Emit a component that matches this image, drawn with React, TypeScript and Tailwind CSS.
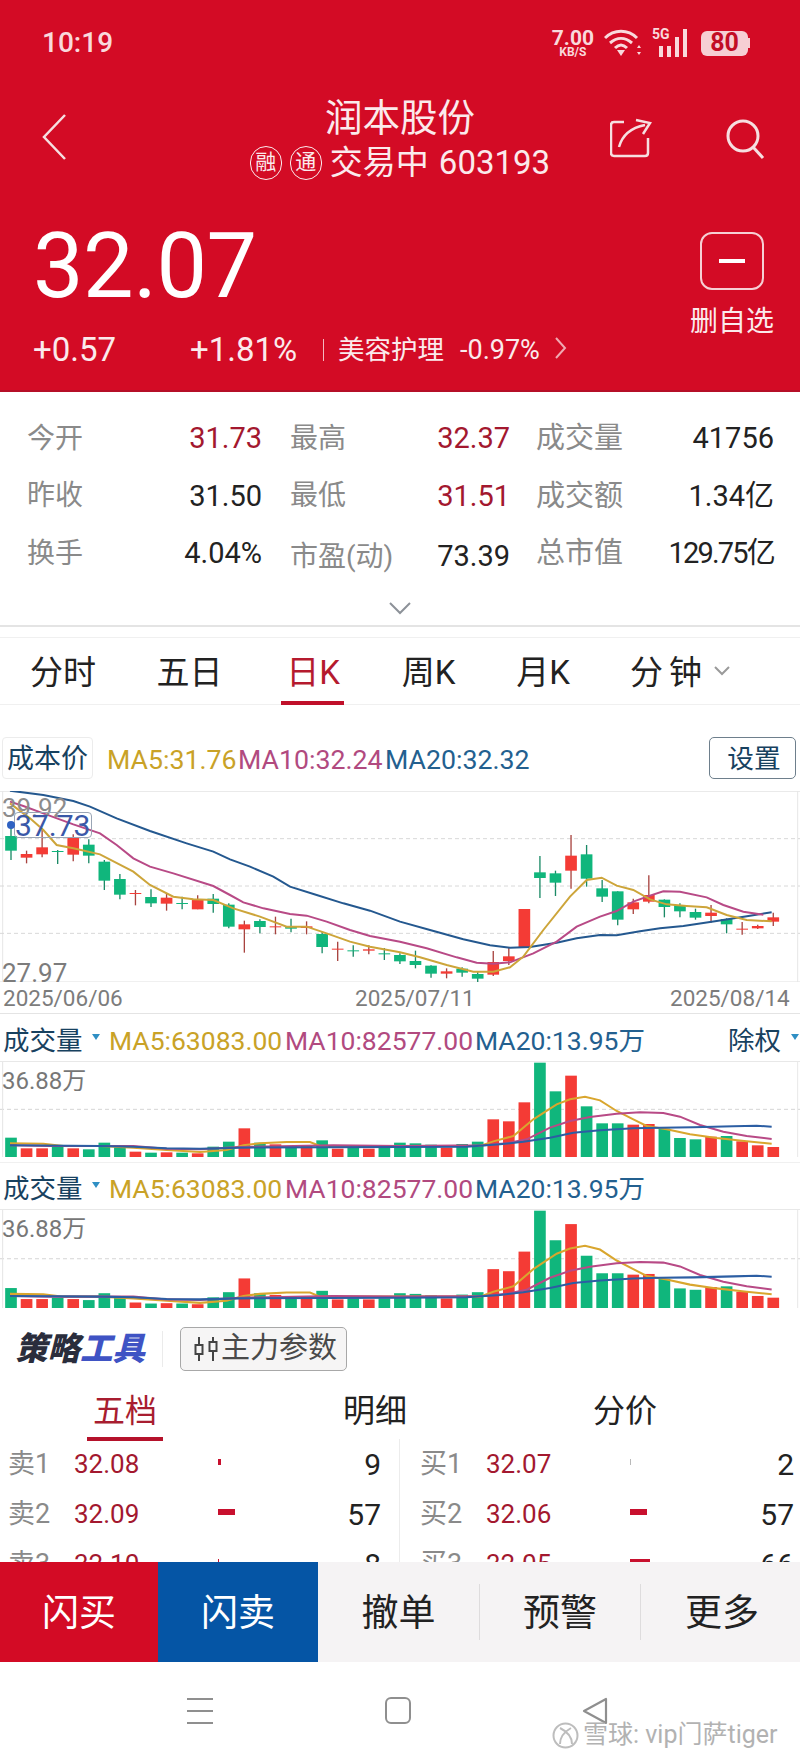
import React from 'react';

const RED = '#f43b35';
const GREEN = '#10b67c';

// [up, high, top, bottom, low] in 3x chart coordinates
const candles: [number, number, number, number, number][] = [
  [0, 320, 348, 392, 420], [1, 392, 402, 413, 430], [1, 330, 382, 403, 412], [0, 390, 393, 396, 432],
  [1, 343, 354, 404, 424], [0, 358, 374, 407, 430], [0, 420, 425, 482, 510], [0, 462, 477, 524, 538],
  [1, 510, 519, 522, 556], [0, 508, 531, 550, 561], [1, 522, 533, 551, 572], [0, 530, 549, 552, 568],
  [1, 526, 540, 568, 568], [0, 522, 536, 552, 578], [0, 550, 554, 620, 625], [1, 602, 613, 628, 698],
  [0, 598, 603, 621, 640], [1, 590, 619, 622, 643], [0, 596, 620, 626, 637], [1, 604, 619, 624, 643],
  [0, 636, 642, 681, 700], [1, 665, 686, 689, 723], [0, 676, 691, 694, 710], [1, 676, 688, 692, 703],
  [0, 684, 700, 703, 720], [0, 700, 705, 724, 732], [0, 692, 723, 735, 745], [0, 736, 737, 761, 773],
  [1, 745, 754, 761, 775], [0, 742, 746, 758, 770], [0, 755, 762, 776, 790], [1, 693, 726, 764, 768],
  [1, 683, 709, 723, 735], [1, 567, 567, 684, 684], [0, 408, 457, 474, 534], [0, 452, 460, 488, 528],
  [1, 345, 407, 452, 506], [0, 375, 403, 476, 500], [0, 480, 505, 530, 546], [0, 514, 514, 599, 616],
  [1, 536, 547, 568, 582], [1, 466, 525, 545, 550], [0, 538, 539, 561, 592], [0, 550, 555, 574, 592],
  [0, 566, 576, 593, 599], [1, 555, 578, 588, 608], [0, 595, 597, 613, 640], [1, 606, 626, 629, 644],
  [1, 614, 618, 625, 627], [1, 578, 592, 605, 618],
];

const ma20 = '30,212 130,225 220,243 270,260 350,295 450,333 560,370 640,395 690,418 750,440 820,470 870,500 950,525 1030,550 1110,572 1200,605 1290,630 1390,658 1470,676 1530,683 1590,681 1670,668 1730,655 1800,645 1850,646 1920,634 1980,625 2050,618 2150,603 2250,587 2315,577';
const ma10 = '30,245 70,258 130,280 220,313 300,340 350,375 400,415 450,440 520,460 640,498 690,525 730,547 790,565 870,582 920,587 980,605 1050,630 1110,648 1200,665 1280,685 1370,712 1430,728 1480,731 1530,727 1600,700 1670,665 1730,620 1800,590 1850,573 1900,545 1950,527 1990,514 2040,515 2120,532 2170,555 2230,575 2290,584';
const ma5 = '30,250 90,295 130,330 170,375 220,385 300,403 400,455 450,495 520,530 580,538 640,540 700,565 780,590 860,620 920,620 980,640 1050,665 1110,680 1200,697 1260,712 1340,735 1420,755 1480,755 1530,742 1570,710 1630,630 1710,530 1760,480 1805,473 1850,497 1900,510 1950,538 2000,553 2060,558 2120,562 2180,585 2240,600 2315,604';

const volTops = [355, 387, 387, 383, 387, 390, 370, 384, 397, 400, 399, 400, 402, 382, 367, 327, 370, 375, 380, 380, 363, 388, 385, 388, 385, 370, 372, 376, 385, 374, 367, 300, 306, 249, 130, 216, 169, 261, 312, 312, 316, 314, 328, 356, 360, 352, 350, 366, 378, 383];
const volMa5 = '30,372 130,373 190,380 300,380 400,385 500,392 600,398 680,392 730,378 780,372 860,368 930,368 960,380 1200,380 1440,380 1480,366 1540,350 1600,300 1670,255 1710,240 1755,232 1800,243 1850,275 1900,300 1940,320 2000,330 2070,345 2150,356 2240,366 2315,373';
const volMa10 = '30,378 150,380 400,380 500,388 600,390 720,383 1000,378 1200,380 1450,378 1520,372 1580,360 1650,325 1710,305 1770,293 1850,283 1920,279 1990,281 2040,292 2100,317 2170,337 2240,350 2315,359';
const volMa20 = '30,378 300,380 400,382 500,387 600,388 720,385 1200,383 1400,382 1500,375 1570,367 1650,355 1720,340 1800,333 1900,327 1980,325 2080,324 2200,321 2270,319 2315,322';

const stats = [
  [['今开', '31.73', 'text-[#a3182f]'], ['最高', '32.37', 'text-[#a3182f]'], ['成交量', '41756', 'text-[#222]']],
  [['昨收', '31.50', 'text-[#222]'], ['最低', '31.51', 'text-[#a3182f]'], ['成交额', '1.34亿', 'text-[#222]']],
  [['换手', '4.04%', 'text-[#222]'], ['市盈(动)', '73.39', 'text-[#222] translate-y-[3px]'], ['总市值', '129.75亿', 'text-[#222] tracking-[-1.8px]']],
];

const book = [
  [['卖1', '32.08', 'w-[3px] bg-[#c8102e]', '9'], ['买1', '32.07', 'w-[1px] bg-[#b9b9b9]', '2']],
  [['卖2', '32.09', 'w-[17px] bg-[#c8102e]', '57'], ['买2', '32.06', 'w-[17px] bg-[#c8102e]', '57']],
  [['卖3', '32.10', 'w-[1px] bg-[#c8102e]', '8'], ['买3', '32.05', 'w-[20px] bg-[#c8102e]', '66']],
];

function VolumeChart({ className }: { className: string }) {
  return (
    <svg className={className} viewBox="0 128 2400 285" preserveAspectRatio="none">
      <line x1="0" y1="270" x2="2400" y2="270" stroke="#d5d5d5" strokeWidth="3" strokeDasharray="12 9" />
      <line x1="8" y1="128" x2="8" y2="413" stroke="#e4e4e4" strokeWidth="3" />
      <line x1="2393" y1="128" x2="2393" y2="413" stroke="#e8e8e8" strokeWidth="3" />
      {volTops.map((t, i) => (
        <rect key={i} x={33 + i * 46.67 - 17.5} y={t} width="35" height={413 - t} fill={candles[i][0] ? RED : GREEN} />
      ))}
      <polyline points={volMa5} fill="none" stroke="#d9a62e" strokeWidth="6" />
      <polyline points={volMa10} fill="none" stroke="#b84a86" strokeWidth="6" />
      <polyline points={volMa20} fill="none" stroke="#2c5ea3" strokeWidth="6" />
    </svg>
  );
}

function VolumeHeader({ right }: { right?: boolean }) {
  return (
    <div className="flex items-center text-[26.5px] leading-[34px]">
      <span className="pl-[3px] w-[92px] text-[#17415f]">成交量</span>
      <span className="w-0 h-0 border-x-[4px] border-x-transparent border-t-[6px] border-t-[#2f8fc4] -translate-y-[4px]" />
      <span className="ml-[9px] w-[176px] text-[#c9a227]">MA5:63083.00</span>
      <span className="w-[190px] text-[#b14a7f]">MA10:82577.00</span>
      <span className="text-[#23608f]">MA20:13.95万</span>
      {right && (
        <>
          <span className="ml-auto text-[#17415f]">除权</span>
          <span className="ml-[10px] mr-[1px] w-0 h-0 border-x-[4px] border-x-transparent border-t-[6px] border-t-[#2f8fc4] -translate-y-[4px]" />
        </>
      )}
    </div>
  );
}

export default function App() {
  return (
    <div className="relative w-[800px] h-[1760px] overflow-hidden bg-white flex flex-col font-[family-name:Roboto,'Noto_Sans_CJK_SC',sans-serif]">
      {/* Red quote header */}
      <header className="h-[392px] shrink-0 bg-[#d30b25] border-b-2 border-[#b50f27] text-white">
        <div className="h-[84px] flex items-center justify-between pl-[42px] pr-[50px] pt-[2px]">
          <span className="text-[28px] font-medium text-[#f9d9dc]">10:19</span>
          <div className="flex items-center text-[#f9d9dc]">
            <div className="flex flex-col items-center font-bold mr-[10px]">
              <span className="text-[21px] leading-[18px]">7.00</span>
              <span className="text-[12px] leading-[11px]">KB/S</span>
            </div>
            <svg width="38" height="28" viewBox="0 0 38 28" fill="none" stroke="currentColor" strokeWidth="3" className="mr-[10px]">
              <path d="M1 9 C10 0 24 0 33 9" />
              <path d="M6 14 C13 8 21 8 28 14" />
              <path d="M11 19 C15 15 19 15 23 19" />
              <path d="M13 21 L17 27 L21 21 Z" fill="currentColor" stroke="none" />
              <path d="M33 19 L35 16 L37 19 Z M33 23 L37 23 L35 26 Z" fill="currentColor" stroke="none" />
            </svg>
            <div className="relative w-[36px] h-[28px] mr-[13px]">
              <span className="absolute left-0 -top-[2px] text-[14px] leading-[14px] font-bold">5G</span>
              <svg className="absolute inset-0" width="36" height="28" viewBox="0 0 36 28" fill="currentColor">
                <rect x="7" y="17" width="4" height="11" />
                <rect x="15" y="17" width="4" height="11" />
                <rect x="23" y="8" width="4" height="20" />
                <rect x="31" y="0" width="4" height="28" />
              </svg>
            </div>
            <div className="flex items-center">
              <div className="w-[47px] h-[25px] rounded-[6px] bg-[#f6cfd4] flex items-center justify-center text-[25px] font-bold text-[#c20d25]">80</div>
              <div className="w-[2px] h-[10px] bg-[#f6cfd4]" />
            </div>
          </div>
        </div>

        <div className="h-[103px] flex pt-[7px]">
          <div className="w-[200px] pl-[42px] pt-[23px]">
            <svg width="24" height="46" viewBox="0 0 24 46" fill="none" stroke="#f6dfe1" strokeWidth="2.5">
              <path d="M23 1 L2 23 L23 45" />
            </svg>
          </div>
          <div className="w-[400px] flex flex-col items-center">
            <div className="mt-[3px] h-[45px] text-[37.5px] leading-[48px] text-[#fbeaec]">润本股份</div>
            <div className="h-[48px] flex items-center text-[33px] text-[#fbeaec]">
              <span className="w-[32px] h-[34px] rounded-full border-[1.5px] border-[#fbeaec] flex items-center justify-center text-[21px]">融</span>
              <span className="ml-[8px] w-[32px] h-[34px] rounded-full border-[1.5px] border-[#fbeaec] flex items-center justify-center text-[21px]">通</span>
              <span className="ml-[8px]">交易中</span>
              <span className="ml-[10px]">603193</span>
            </div>
          </div>
          <div className="pl-[10px] pt-[27px] flex">
            <svg width="42" height="40" viewBox="0 0 42 40" fill="none" stroke="#f6dfe1" strokeWidth="2.5">
              <path d="M14 4 H4 Q1 4 1 7 V35 Q1 38 4 38 H35 Q38 38 38 35 V20" />
              <path d="M9 29 C12 18 20 10 35 7" />
              <path d="M26 2 L40 5 L33 16" />
            </svg>
            <svg width="42" height="42" viewBox="0 0 42 42" fill="none" stroke="#f6dfe1" strokeWidth="3" className="ml-[73px]">
              <circle cx="18" cy="18" r="15" />
              <path d="M28 29 L38 40" />
            </svg>
          </div>
        </div>

        <div className="flex justify-between">
          <div className="pl-[33px] pt-[30px]">
            <div className="h-[98px] text-[90px] leading-[100px] tracking-[-0.5px]">32.07</div>
            <div className="h-[70px] flex items-center text-[#fbeaec]">
              <span className="w-[157px] text-[33px]">+0.57</span>
              <span className="w-[133px] text-[33px]">+1.81%</span>
              <span className="w-[1px] h-[22px] bg-[#f3b9c0]" />
              <span className="ml-[14px] text-[26.5px]">美容护理</span>
              <span className="ml-[16px] text-[27px]">-0.97%</span>
              <svg width="12" height="22" viewBox="0 0 12 22" fill="none" stroke="#f0a9b2" strokeWidth="2" className="ml-[15px] -translate-y-[2px]">
                <path d="M1 1 L10 11 L1 21" />
              </svg>
            </div>
          </div>
          <div className="flex flex-col items-center pr-[26px] pt-[45px]">
            <div className="w-[64px] h-[58px] rounded-[12px] border-2 border-[#f6cfd4] flex items-center justify-center">
              <div className="w-[26px] h-[3.5px] bg-white" />
            </div>
            <div className="mt-[14px] text-[28px] leading-[36px] text-[#fbeaec]">删自选</div>
          </div>
        </div>
      </header>

      {/* Stats */}
      <section className="h-[235px] shrink-0 relative pt-[18px] border-b-2 border-[#e4e4e4] text-[29px]">
        {stats.map((row, r) => (
          <div key={r} className="h-[57.5px] flex items-center pl-[27px]">
            {row.map((c, i) => (
              <div key={i} className={`flex justify-between items-center ${i === 0 ? 'w-[235px] mr-[28px]' : i === 1 ? 'w-[220px] mr-[26px]' : 'w-[238px]'}`}>
                <span className={`text-[#8a8a8a] ${c[0] === '市盈(动)' ? 'translate-y-[3px] text-[28px]' : i === 2 ? '' : 'text-[28px]'}`}>{c[0]}</span>
                <span className={c[2]}>{c[1]}</span>
              </div>
            ))}
          </div>
        ))}
        <svg width="22" height="13" viewBox="0 0 22 13" fill="none" stroke="#8d9299" strokeWidth="2" className="absolute left-[389px] top-[210px]">
          <path d="M1 1 L11 11 L21 1" />
        </svg>
      </section>

      {/* Period tabs */}
      <nav className="mt-[10px] h-[68px] shrink-0 flex items-center pt-[4px] border-y border-[#f0f0f0] text-[33px] text-[#222] relative">
        <span className="w-[126px] text-center">分时</span>
        <span className="w-[127px] text-center">五日</span>
        <span className="w-[120px] text-center text-[#b51a2e]">日K</span>
        <span className="w-[111px] text-center">周K</span>
        <span className="w-[118px] text-center">月K</span>
        <span className="ml-[28px] tracking-[6px]">分钟</span>
        <svg width="16" height="10" viewBox="0 0 16 10" fill="none" stroke="#9a9a9a" strokeWidth="2" className="ml-[6px] -translate-y-[2px]">
          <path d="M1 1 L8 8 L15 1" />
        </svg>
        <span className="absolute left-[281px] bottom-[-1px] w-[63px] h-[4px] bg-[#c0102a]" />
      </nav>

      {/* K chart legend */}
      <div className="h-[86px] shrink-0 pt-[32px] pl-[2px] pr-[4px] flex items-start text-[26.7px]">
        <span className="w-[91px] h-[42px] rounded-[4px] border border-[#ececec] flex items-center justify-center pt-[2px] text-[27px] text-[#17415f]">成本价</span>
        <span className="ml-[14px] w-[131px] leading-[46px] text-[#c9a227]">MA5:31.76</span>
        <span className="w-[147px] leading-[46px] text-[#b14a7f]">MA10:32.24</span>
        <span className="leading-[46px] text-[#23608f]">MA20:32.32</span>
        <span className="ml-auto w-[87px] h-[42px] rounded-[5px] border border-[#6e7f8c] flex items-center justify-center pl-[3px] pt-[2px] text-[#17415f]">设置</span>
      </div>

      {/* Candle chart */}
      <div className="relative h-[191px] shrink-0">
        <svg width="800" height="191" viewBox="0 213 2400 573" className="block">
          <line x1="0" y1="214" x2="2400" y2="214" stroke="#e6e6e6" strokeWidth="3" />
          <line x1="0" y1="786" x2="2400" y2="786" stroke="#e0e0e0" strokeWidth="3" />
          <line x1="8" y1="213" x2="8" y2="786" stroke="#e6e6e6" strokeWidth="3" />
          <line x1="2393" y1="213" x2="2393" y2="786" stroke="#e6e6e6" strokeWidth="3" />
          {[356, 498, 640].map((y) => (
            <line key={y} x1="0" y1={y} x2="2400" y2={y} stroke="#d8d8d8" strokeWidth="3" strokeDasharray="12 9" />
          ))}
          {candles.map(([up, hi, top, bot, lo], i) => {
            const x = 33 + i * 46.67;
            return (
              <g key={i}>
                <line x1={x} y1={hi} x2={x} y2={lo} stroke={up ? '#a8433f' : '#1b8a66'} strokeWidth="4" />
                <rect x={x - 17.5} y={top} width="35" height={Math.max(bot - top, 3)} fill={up ? RED : GREEN} />
              </g>
            );
          })}
          <polyline points={ma20} fill="none" stroke="#24588f" strokeWidth="6" />
          <polyline points={ma10} fill="none" stroke="#b84a86" strokeWidth="6" />
          <polyline points={ma5} fill="none" stroke="#cda53a" strokeWidth="6" />
        </svg>
        <span className="absolute left-[2px] top-[2px] text-[26px] leading-[30px] text-[#8c8c8c]">39.92</span>
        <span className="absolute left-[14px] top-[21px] h-[26px] rounded-[4px] border border-[#9aa5b5] flex items-center pr-[1px] text-[30px] text-[#3a58a8]">37.73</span>
        <span className="absolute left-[7px] top-[30px] w-[8px] h-[8px] rounded-full bg-[#2f62c2]" />
        <span className="absolute left-[2px] bottom-[-6px] text-[26px] leading-[30px] text-[#7c7c7c]">27.97</span>
      </div>

      <div className="h-[32px] shrink-0 flex items-center pt-[2px] pl-[3px] border-b border-[#e4e4e4] text-[22.5px] text-[#7c7c7c]">
        <span className="w-[352px]">2025/06/06</span>
        <span className="w-[315px]">2025/07/11</span>
        <span>2025/08/14</span>
      </div>

      {/* Volume panels */}
      <div className="h-[48px] shrink-0 pt-[10px] border-b border-[#e8e8e8]">
        <VolumeHeader right />
      </div>
      <div className="relative h-[101px] shrink-0 border-b border-[#f0f0f0]">
        <VolumeChart className="block w-[800px] h-[95px]" />
        <span className="absolute left-[2px] top-[5px] text-[24px] leading-[28px] text-[#777]">36.88万</span>
      </div>
      <div className="h-[47px] shrink-0 pt-[9px] border-b border-[#e8e8e8]">
        <VolumeHeader />
      </div>
      <div className="relative h-[98px] shrink-0">
        <VolumeChart className="block w-[800px] h-[98px]" />
        <span className="absolute left-[2px] top-[5px] text-[24px] leading-[28px] text-[#777]">36.88万</span>
      </div>

      {/* Strategy tools */}
      <div className="h-[78px] shrink-0 flex items-start pt-[19px] pl-[15px]">
        <span className="w-[132px] h-[44px] flex items-center text-[32.5px] leading-[44px] font-black italic text-[#2a2d3c] whitespace-nowrap">
          策略<span className="text-[#3f53c4]">工具</span>
        </span>
        <span className="ml-[15px] mt-[4px] w-[1px] h-[36px] bg-[#ebebeb]" />
        <span className="ml-[17px] w-[167px] h-[44px] rounded-[5px] border border-[#a8a8a8] bg-[#f6f5f5] flex items-center pl-[12px] text-[29px] text-[#4a4a4a]">
          <svg width="26" height="28" viewBox="0 0 26 28" fill="none" stroke="#444" strokeWidth="2" className="mr-[2px] shrink-0">
            <path d="M6 2 V26 M20 2 V26" />
            <rect x="2.5" y="10" width="7" height="9" fill="#f6f5f5" />
            <rect x="16.5" y="7" width="7" height="9" fill="#f6f5f5" />
          </svg>
          <span className="whitespace-nowrap">主力参数</span>
        </span>
      </div>

      {/* Order book */}
      <div className="h-[55px] shrink-0 flex text-[32px] leading-[50px] text-[#222] relative">
        <span className="w-[250px] text-center text-[#a81d30]">五档</span>
        <span className="w-[250px] text-center">明细</span>
        <span className="w-[250px] text-center">分价</span>
        <span className="absolute left-[87px] top-[51px] w-[76px] h-[4px] bg-[#b5122b]" />
      </div>
      <div className="flex-1 min-h-0 overflow-hidden flex -mt-[2px]">
        {[0, 1].map((side) => (
          <div key={side} className={`w-[400px] h-[150px] ${side === 0 ? 'pl-[8px] pr-[18px] border-r border-[#ececec]' : 'pl-[20px] pr-[6px]'}`}>
            {book.map((row, i) => (
              <div key={i} className="h-[50px] flex items-center">
                <span className="w-[66px] text-[27px] text-[#8a8a8a]">{row[side][0]}</span>
                <span className="w-[144px] text-[26px] text-[#a3182f]">{row[side][1]}</span>
                <span className="flex-1">
                  <span className={`block h-[6px] -translate-y-[2px] ${row[side][2]}`} />
                </span>
                <span className="text-[30px] text-[#222]">{row[side][3]}</span>
              </div>
            ))}
          </div>
        ))}
      </div>

      {/* Action bar */}
      <div className="relative h-[100px] shrink-0 flex bg-[#f5f3f4] text-[37px] text-[#222]">
        <div className="w-[158px] bg-[#d30b25] text-white flex items-center justify-center pt-[3px]">闪买</div>
        <div className="w-[160px] bg-[#0555a5] text-white flex items-center justify-center pt-[3px]">闪卖</div>
        <div className="w-[161px] flex items-center justify-center pt-[3px]">撤单</div>
        <div className="w-[161px] flex items-center justify-center pt-[3px] border-l border-[#dedcdd] my-[22px]">预警</div>
        <div className="w-[160px] flex items-center justify-center pt-[3px] pl-[3px] border-l border-[#dedcdd] my-[22px]">更多</div>
      </div>

      {/* System nav */}
      <div className="relative h-[98px] shrink-0 flex items-start pt-[35px] pl-[186px]">
        <svg width="28" height="28" viewBox="0 0 28 28" fill="none" stroke="#8f8f8f" strokeWidth="2.2">
          <path d="M1 2 H27 M1 14 H27 M1 26 H27" />
        </svg>
        <div className="ml-[171px] w-[26px] h-[27px] rounded-[6px] border-2 border-[#8f8f8f]" />
        <svg width="26" height="28" viewBox="0 0 26 28" fill="none" stroke="#8f8f8f" strokeWidth="2.2" className="ml-[171px]">
          <path d="M24 2 V26 L2 14 Z" strokeLinejoin="round" />
        </svg>
        <div className="absolute left-[552px] top-[58px] flex items-center text-[25px] leading-[30px] text-[#b2b2b2]">
          <svg width="27" height="27" viewBox="0 0 27 27" fill="none" stroke="#bdbdbd" strokeWidth="2" className="mr-[4px]">
            <circle cx="13.5" cy="13.5" r="12" />
            <path d="M8 6 C16 10 20 16 20 22 M19 6 C12 10 8 16 8 22" />
          </svg>
          <span>雪球: vip门萨tiger</span>
        </div>
      </div>
    </div>
  );
}
